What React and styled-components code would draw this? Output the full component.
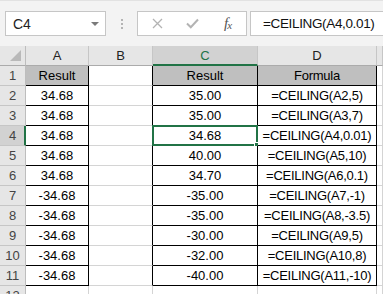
import React from "react";
import styled, { createGlobalStyle } from "styled-components";

const GREEN = "#217346";
const GRID = "#d4d4d4";
const INK = "#000";

const Global = createGlobalStyle`
	html, body {
		margin: 0;
		padding: 0;
		overflow: hidden;
		background: #fff;
	}
	body {
		font-family: "Liberation Sans", Arial, sans-serif;
	}
`;

const Page = styled.div`
	width: 383px;
	height: 294px;
	overflow: hidden;
	background: #fff;
`;

const Toolbar = styled.div`
	display: flex;
	align-items: flex-start;
	height: 46px;
	box-sizing: border-box;
	padding: 11px 0 0 5px;
	background: #f3f3f3;
	border-top: 1px solid #e2e2e2;
`;

const Field = styled.div`
	box-sizing: border-box;
	height: 25px;
	margin-top: -1px;
	background: #fff;
	border: 1px solid #c6c6c6;
	display: flex;
	align-items: center;
`;

const NameBox = styled(Field)`
	width: 101px;
	padding: 0 6px 0 7px;
	justify-content: space-between;
	font-size: 14px;
	color: #222;
`;

const Caret = styled.span`
	width: 0;
	height: 0;
	border-left: 4px solid transparent;
	border-right: 4px solid transparent;
	border-top: 4px solid #7a7a7a;
`;

const Grip = styled.div`
	display: flex;
	flex-direction: column;
	gap: 2px;
	margin: 7px 0 0 15px;
	width: 2px;

	span {
		width: 2px;
		height: 2px;
		background: #b4b4b4;
	}
`;

const FxBox = styled(Field)`
	width: 110px;
	margin-left: 14px;
	padding-left: 2px;
`;

const FxSlot = styled.div`
	width: 35px;
	display: flex;
	justify-content: center;
	align-items: center;
`;

const Fx = styled.span`
	font-family: "Liberation Serif", "Times New Roman", serif;
	font-style: italic;
	font-size: 15px;
	color: #555;
	letter-spacing: -1px;

	small {
		font-size: 11px;
		position: relative;
		top: 1px;
	}
`;

const FormulaInput = styled(Field)`
	flex: 1;
	margin-left: 3px;
	margin-right: -2px;
	padding-left: 12px;
	font-size: 13.5px;
	letter-spacing: -0.35px;
	color: #111;
`;

const Sheet = styled.div`
	display: grid;
	grid-template-columns: 26px 63px 64px 105px 119px 1fr;
	grid-auto-rows: 20px;
	font-size: 13px;
`;

const Corner = styled.div`
	box-sizing: border-box;
	background: #e6e6e6;
	border-right: 1px solid #bdbdbd;
	border-bottom: 1px solid #ababab;
	position: relative;

	&::after {
		content: "";
		position: absolute;
		right: 4px;
		bottom: 4px;
		width: 0;
		height: 0;
		border-left: 11px solid transparent;
		border-bottom: 11px solid #b9b9b9;
	}
`;

const ColHead = styled.div`
	box-sizing: border-box;
	display: flex;
	align-items: center;
	justify-content: center;
	background: ${(p) => (p.$active ? "#d2d2d2" : "#e6e6e6")};
	color: ${(p) => (p.$active ? GREEN : "#222")};
	border-right: 1px solid #c6c6c6;
	border-bottom: ${(p) => (p.$active ? `2px solid ${GREEN}` : "1px solid #ababab")};
	padding-top: ${(p) => (p.$active ? "1px" : "0")};
`;

const RowHead = styled.div`
	box-sizing: border-box;
	display: flex;
	align-items: center;
	justify-content: center;
	background: ${(p) => (p.$active ? "#d2d2d2" : "#e6e6e6")};
	color: #444;
	border-right: ${(p) => (p.$active ? `2px solid ${GREEN}` : "1px solid #bdbdbd")};
	border-bottom: 1px solid #c6c6c6;
	padding-left: ${(p) => (p.$active ? "1px" : "0")};
`;

const Cell = styled.div`
	box-sizing: border-box;
	position: relative;
	display: flex;
	align-items: center;
	justify-content: center;
	white-space: nowrap;
	letter-spacing: ${(p) => (p.$tight ? "-0.25px" : "0")};
	color: ${INK};
	background: ${(p) => (p.$fill ? "#bfbfbf" : "#fff")};
	border-right: 1px solid ${(p) => p.$right};
	border-bottom: 1px solid ${(p) => p.$bottom};
`;

const Selection = styled.div`
	position: absolute;
	top: -1px;
	left: -1px;
	right: -1px;
	bottom: -1px;
	border: 2px solid ${GREEN};
	pointer-events: none;

	&::after {
		content: "";
		position: absolute;
		right: -5px;
		bottom: -5px;
		width: 5px;
		height: 5px;
		background: ${GREEN};
		border: 1px solid #fff;
	}
`;

const rows = [
	["Result", "", "Result", "Formula"],
	["34.68", "", "35.00", "=CEILING(A2,5)"],
	["34.68", "", "35.00", "=CEILING(A3,7)"],
	["34.68", "", "34.68", "=CEILING(A4,0.01)"],
	["34.68", "", "40.00", "=CEILING(A5,10)"],
	["34.68", "", "34.70", "=CEILING(A6,0.1)"],
	["-34.68", "", "-35.00", "=CEILING(A7,-1)"],
	["-34.68", "", "-35.00", "=CEILING(A8,-3.5)"],
	["-34.68", "", "-30.00", "=CEILING(A9,5)"],
	["-34.68", "", "-32.00", "=CEILING(A10,8)"],
	["-34.68", "", "-40.00", "=CEILING(A11,-10)"],
	["", "", "", ""],
];

const columns = ["A", "B", "C", "D", ""];
// columns that belong to the bordered tables
const inTable = [true, false, true, true, false];

const Cross = () => (
	<svg width="11" height="11" viewBox="0 0 11 11">
		<path d="M1 1L10 10M10 1L1 10" stroke="#b3b3b3" strokeWidth="1.3" fill="none" />
	</svg>
);

const Check = () => (
	<svg width="13" height="11" viewBox="0 0 13 11">
		<path d="M1 5.5L4.8 9.2L12 1.5" stroke="#b3b3b3" strokeWidth="2" fill="none" />
	</svg>
);

export default function App() {
	return (
		<Page>
			<Global />
			<Toolbar>
				<NameBox>
					C4
					<Caret />
				</NameBox>
				<Grip>
					<span />
					<span />
					<span />
				</Grip>
				<FxBox>
					<FxSlot>
						<Cross />
					</FxSlot>
					<FxSlot>
						<Check />
					</FxSlot>
					<FxSlot>
						<Fx>
							f<small>x</small>
						</Fx>
					</FxSlot>
				</FxBox>
				<FormulaInput>=CEILING(A4,0.01)</FormulaInput>
			</Toolbar>
			<Sheet>
				<Corner />
				{columns.map((c, i) => (
					<ColHead key={i} $active={c === "C"}>
						{c}
					</ColHead>
				))}
				{rows.map((row, r) => {
					const tableRow = r < 11;
					const cells = [...row, ""];
					return (
						<React.Fragment key={r}>
							<RowHead $active={r === 3}>{r + 1}</RowHead>
							{cells.map((text, c) => {
								const boxed = tableRow && (inTable[c] || inTable[c + 1]);
								const bottomBoxed = tableRow && inTable[c];
								return (
									<Cell
										key={c}
										$tight={c === 3}
										$fill={r === 0 && inTable[c]}
										$right={boxed ? INK : GRID}
										$bottom={bottomBoxed ? INK : GRID}
									>
										{text}
										{r === 3 && c === 2 && <Selection />}
									</Cell>
								);
							})}
						</React.Fragment>
					);
				})}
			</Sheet>
		</Page>
	);
}
